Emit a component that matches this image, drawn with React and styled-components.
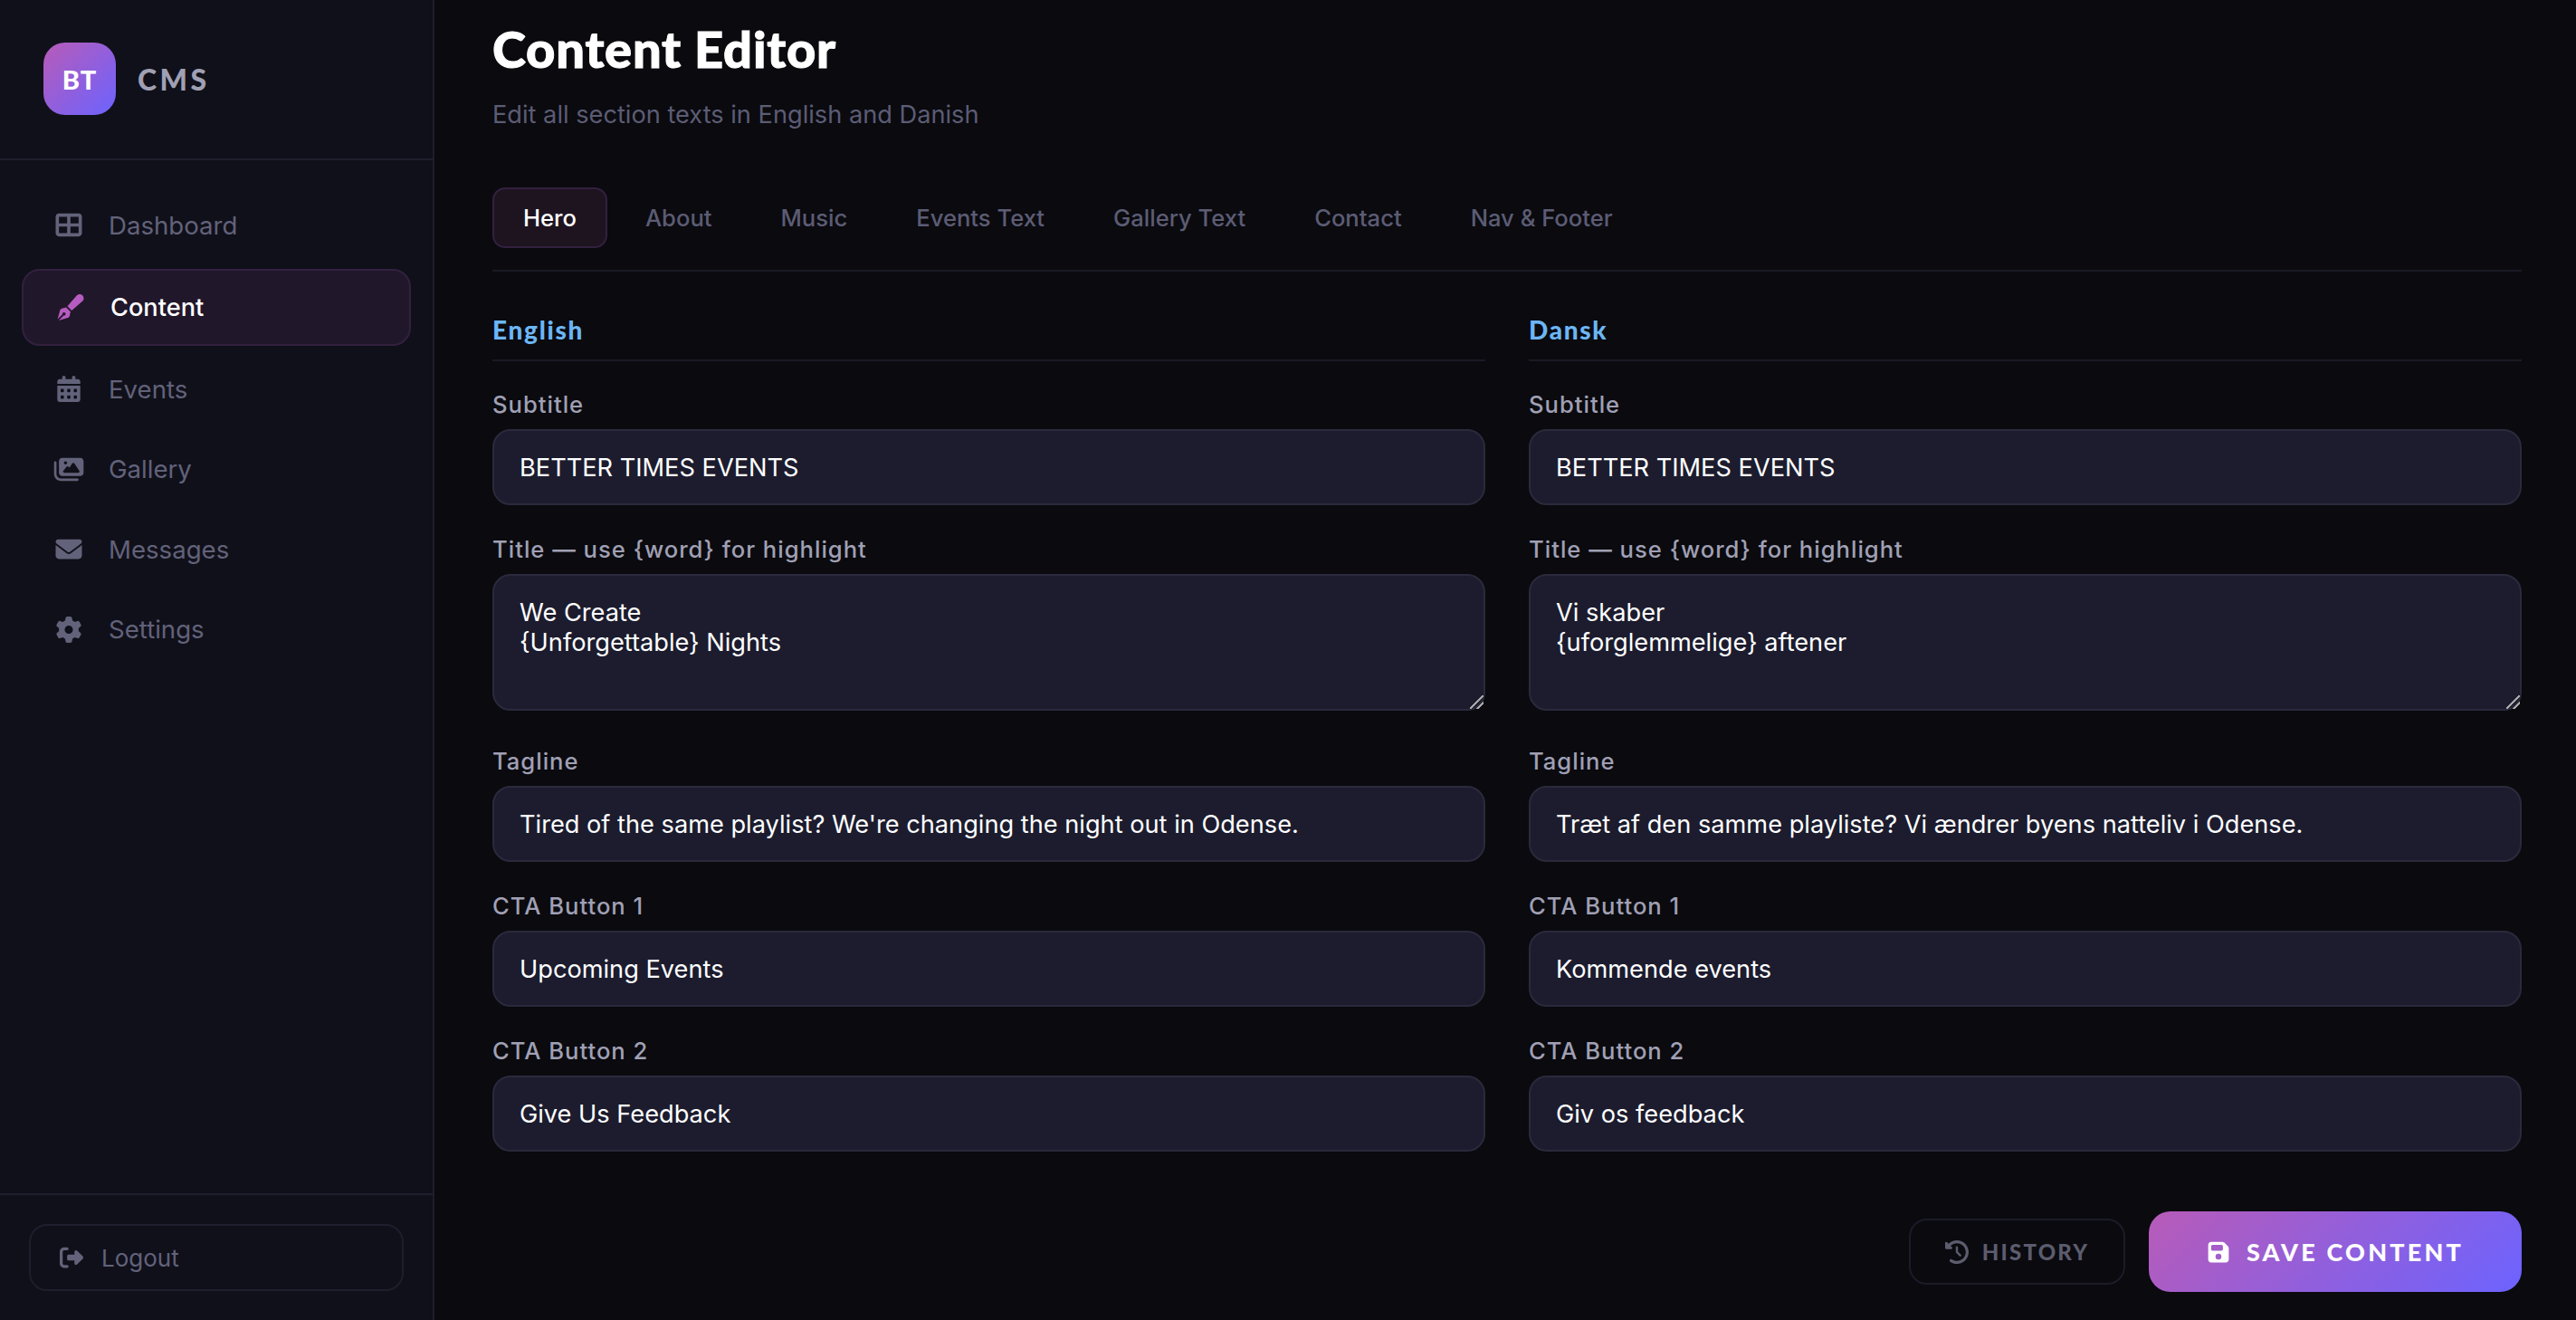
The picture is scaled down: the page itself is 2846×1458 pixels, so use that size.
import React from 'react';
import styled, { createGlobalStyle } from 'styled-components';
import {
  FaCalendarDays, FaClockRotateLeft, FaEnvelope, FaFloppyDisk, FaGear, FaImages,
  FaPenFancy, FaRightFromBracket, FaTableCellsLarge,
} from 'react-icons/fa6';

const GlobalStyle = createGlobalStyle`
  html, body {
    margin: 0;
    height: 100%;
    background: #0a0a0f;
    overflow: hidden;
  }
  * {
    box-sizing: border-box;
  }
`;

const Shell = styled.div`
  display: flex;
  width: 100%;
  height: 1458px;
  background: #0a0a0f;
  font-family: Inter, "Liberation Sans", sans-serif;
`;

const Sidebar = styled.aside`
  display: flex;
  flex-direction: column;
  flex: 0 0 480px;
  background: #10101a;
  border-right: 2px solid #1e1e2c;
`;

const Brand = styled.div`
  display: flex;
  align-items: center;
  gap: 24px;
  height: 177px;
  padding: 0 48px 1px;
  border-bottom: 2px solid #1e1e2c;
`;

const LogoMark = styled.div`
  display: flex;
  align-items: center;
  justify-content: center;
  width: 80px;
  height: 80px;
  border-radius: 24px;
  background: linear-gradient(135deg, #b85bb8, #6c63ff);
  color: #fff;
  font-family: Lato, sans-serif;
  font-size: 29px;
  font-weight: 900;
  letter-spacing: 1px;
`;

const BrandName = styled.span`
  color: #a0a0b4;
  font-family: Lato, sans-serif;
  font-size: 32px;
  font-weight: 900;
  letter-spacing: 3.5px;
`;

const Nav = styled.nav`
  display: flex;
  flex: 1;
  flex-direction: column;
  gap: 7.6px;
  padding: 31px 24px;
`;

const NavItem = styled.a`
  display: flex;
  align-items: center;
  gap: 24px;
  height: ${(props) => (props.$active ? '85px' : '81px')};
  padding: 0 32px;
  border: ${(props) => (props.$active ? '2px solid #33203f' : 'none')};
  border-radius: 20px;
  background: ${(props) => (props.$active ? '#21172a' : 'transparent')};
  color: ${(props) => (props.$active ? '#fff' : '#62627a')};
  font-size: ${(props) => (props.$active ? '27.2px' : '27.6px')};
  font-weight: ${(props) => (props.$active ? 500 : 400)};
`;

const NavIcon = styled.span`
  display: flex;
  align-items: center;
  justify-content: center;
  flex: 0 0 40px;
  color: ${(props) => (props.$active ? '#b65cc0' : '#62627a')};

  svg {
    width: 36px;
    height: 29px;
  }
`;

const SidebarFooter = styled.div`
  padding: 32px;
  border-top: 2px solid #1e1e2c;
`;

const LogoutButton = styled.button`
  display: flex;
  align-items: center;
  gap: 20px;
  width: 100%;
  height: 74px;
  padding: 0 32px;
  border: 2px solid #1e1e2c;
  border-radius: 20px;
  background: transparent;
  color: #62627a;
  font-family: inherit;
  font-size: 26px;

  svg {
    width: 26px;
    height: 26px;
  }
`;

const Main = styled.main`
  flex: 1;
  min-width: 0;
  padding: 20px 60px 0 64px;
  overflow: hidden;
`;

const Title = styled.h1`
  margin: 0;
  color: #fff;
  font-family: Lato, sans-serif;
  font-size: 56px;
  font-weight: 900;
  letter-spacing: 0.8px;
  line-height: 68px;
  -webkit-text-stroke: 1px #fff;
`;

const Subtitle = styled.p`
  margin: 22px 0 0;
  color: #5c5c74;
  font-size: 27.2px;
  line-height: 34px;
`;

const Tabs = styled.div`
  display: flex;
  gap: 8px;
  margin-top: 63px;
  padding-bottom: 24px;
  border-bottom: 2px solid #1a1a24;
`;

const Tab = styled.button`
  height: 67px;
  padding: 0 ${(props) => (props.$active ? '32px' : '34px')};
  border: ${(props) => (props.$active ? '2px solid #33203f' : 'none')};
  border-radius: 14px;
  background: ${(props) => (props.$active ? '#1e1420' : 'transparent')};
  color: ${(props) => (props.$active ? '#fff' : '#5c5c74')};
  font-family: inherit;
  font-size: 25.6px;
  font-weight: 500;
`;

const Columns = styled.div`
  display: grid;
  grid-template-columns: 1fr 1fr;
  gap: 48px;
  padding-top: 47px;
`;

const Column = styled.section`
  display: flex;
  flex-direction: column;
  gap: 28px;
`;

const LangTitle = styled.h3`
  margin: 0 0 -1px;
  padding-bottom: 16px;
  border-bottom: 2px solid #1a1a24;
  color: #6cb6f5;
  font-family: Lato, sans-serif;
  font-size: 28px;
  font-weight: 900;
  letter-spacing: 1.7px;
  line-height: 34px;
`;

const Field = styled.label`
  display: flex;
  flex-direction: column;
  gap: 6px;
`;

const FieldLabel = styled.span`
  color: #a0a0b4;
  font-size: 25.6px;
  font-weight: 500;
  letter-spacing: 1px;
  line-height: 42px;
`;

const TextInput = styled.input`
  width: 100%;
  height: 84px;
  padding: 0 28px;
  border: 2px solid #2a2a3c;
  border-radius: 20px;
  outline: none;
  background: #1c1c2e;
  color: #fff;
  font-family: inherit;
  font-size: 27.2px;
`;

const TextArea = styled.textarea`
  display: block;
  width: 100%;
  height: 151px;
  margin-bottom: 7px;
  padding: 24px 28px;
  border: 2px solid #2a2a3c;
  border-radius: 20px;
  outline: none;
  background: #1c1c2e;
  color: #fff;
  font-family: inherit;
  font-size: 27.2px;
  line-height: 33px;
  resize: vertical;

  &::-webkit-resizer {
    background: linear-gradient(
      135deg,
      transparent 0 46%,
      #a8a8a8 46% 56%,
      transparent 56% 72%,
      #a8a8a8 72% 82%,
      transparent 82%
    );
  }
`;

const Actions = styled.div`
  display: flex;
  align-items: center;
  justify-content: flex-end;
  gap: 26px;
  margin-top: 66px;
`;

const HistoryButton = styled.button`
  display: flex;
  align-items: center;
  justify-content: center;
  gap: 15px;
  width: 239px;
  height: 73px;
  border: 2px solid #1c1c28;
  border-radius: 20px;
  background: transparent;
  color: #5c5c6e;
  font-family: Lato, sans-serif;
  font-size: 24px;
  font-weight: 900;
  letter-spacing: 2.2px;

  svg {
    width: 26px;
    height: 26px;
  }
`;

const SaveButton = styled.button`
  display: flex;
  align-items: center;
  justify-content: center;
  gap: 18px;
  width: 412px;
  height: 89px;
  border: none;
  border-radius: 24px;
  background: linear-gradient(135deg, #b85bb8, #6c63ff);
  color: #fff;
  font-family: Lato, sans-serif;
  font-size: 27px;
  font-weight: 900;
  letter-spacing: 3.2px;

  svg {
    width: auto;
    height: 26px;
  }
`;

const NAV_ITEMS = [
  { label: 'Dashboard', icon: FaTableCellsLarge },
  { label: 'Content', icon: FaPenFancy, active: true },
  { label: 'Events', icon: FaCalendarDays },
  { label: 'Gallery', icon: FaImages },
  { label: 'Messages', icon: FaEnvelope },
  { label: 'Settings', icon: FaGear },
];

const TABS = ['Hero', 'About', 'Music', 'Events Text', 'Gallery Text', 'Contact', 'Nav & Footer'];

const LANGUAGES = [
  {
    name: 'English',
    subtitle: 'BETTER TIMES EVENTS',
    title: 'We Create\n{Unforgettable} Nights',
    tagline: "Tired of the same playlist? We're changing the night out in Odense.",
    cta1: 'Upcoming Events',
    cta2: 'Give Us Feedback',
  },
  {
    name: 'Dansk',
    subtitle: 'BETTER TIMES EVENTS',
    title: 'Vi skaber\n{uforglemmelige} aftener',
    tagline: 'Træt af den samme playliste? Vi ændrer byens natteliv i Odense.',
    cta1: 'Kommende events',
    cta2: 'Giv os feedback',
  },
];

function LanguageColumn({ lang }) {
  return (
    <Column>
      <LangTitle>{lang.name}</LangTitle>
      <Field>
        <FieldLabel>Subtitle</FieldLabel>
        <TextInput defaultValue={lang.subtitle} />
      </Field>
      <Field>
        <FieldLabel>Title — use {'{word}'} for highlight</FieldLabel>
        <TextArea defaultValue={lang.title} />
      </Field>
      <Field>
        <FieldLabel>Tagline</FieldLabel>
        <TextInput defaultValue={lang.tagline} />
      </Field>
      <Field>
        <FieldLabel>CTA Button 1</FieldLabel>
        <TextInput defaultValue={lang.cta1} />
      </Field>
      <Field>
        <FieldLabel>CTA Button 2</FieldLabel>
        <TextInput defaultValue={lang.cta2} />
      </Field>
    </Column>
  );
}

export default function App() {
  return (
    <Shell>
      <GlobalStyle />
      <Sidebar>
        <Brand>
          <LogoMark>BT</LogoMark>
          <BrandName>CMS</BrandName>
        </Brand>
        <Nav>
          {NAV_ITEMS.map((item) => (
            <NavItem key={item.label} $active={item.active}>
              <NavIcon $active={item.active}><item.icon /></NavIcon>
              {item.label}
            </NavItem>
          ))}
        </Nav>
        <SidebarFooter>
          <LogoutButton>
            <FaRightFromBracket />
            Logout
          </LogoutButton>
        </SidebarFooter>
      </Sidebar>
      <Main>
        <Title>Content Editor</Title>
        <Subtitle>Edit all section texts in English and Danish</Subtitle>
        <Tabs>
          {TABS.map((tab) => (
            <Tab key={tab} $active={tab === 'Hero'}>{tab}</Tab>
          ))}
        </Tabs>
        <Columns>
          {LANGUAGES.map((lang) => (
            <LanguageColumn key={lang.name} lang={lang} />
          ))}
        </Columns>
        <Actions>
          <HistoryButton>
            <FaClockRotateLeft />
            HISTORY
          </HistoryButton>
          <SaveButton>
            <FaFloppyDisk />
            SAVE CONTENT
          </SaveButton>
        </Actions>
      </Main>
    </Shell>
  );
}
